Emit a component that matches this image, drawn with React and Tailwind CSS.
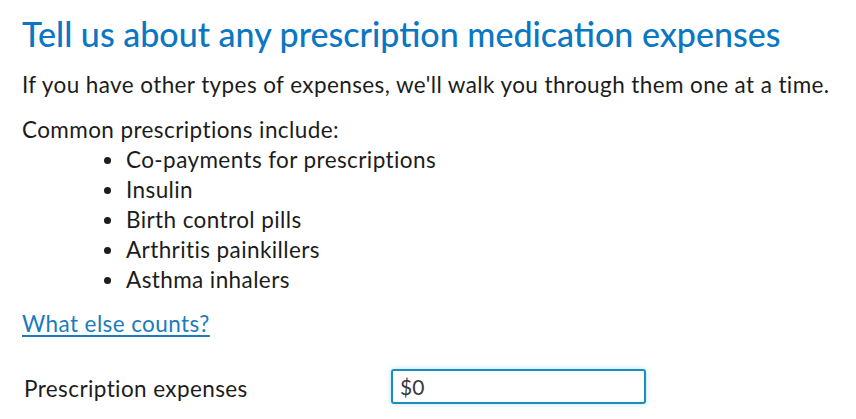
import React from "react";

const items = [
  "Co-payments for prescriptions",
  "Insulin",
  "Birth control pills",
  "Arthritis painkillers",
  "Asthma inhalers",
];

export default function App() {
  return (
    <div className="min-h-[419px] w-[856px] bg-white pl-[22px] pt-[14px] font-['Lato','Noto_Sans',sans-serif] text-[#1c1c1c]">
      <h1 className="text-[34px] leading-[40px] font-medium text-[#0a77c2]">
        Tell us about any prescription medication expenses
      </h1>
      <div className="text-[22.5px] tracking-[0.4px]">
        <p className="mt-[16px] leading-[30px]">
          If you have other types of expenses, we'll walk you through them one at a time.
        </p>
        <p className="mt-[15px] leading-[30px]">Common prescriptions include:</p>
        <ul className="pl-[82px] leading-[30px]">
          {items.map((item) => (
            <li key={item} className="flex items-center">
              <span className="mr-[15px] h-[7px] w-[7px] rounded-full bg-[#1c1c1c]" />
              {item}
            </li>
          ))}
        </ul>
        <a href="#" className="mt-[14px] block w-fit leading-[30px] text-[#1a7cbd] underline underline-offset-[3px]">
          What else counts?
        </a>
        <div className="mt-[30px] flex items-center">
          <label className="w-[369px] pl-[2px] pt-[5px] leading-[30px]">Prescription expenses</label>
          <input
            readOnly
            value="$0"
            className="h-[35px] w-[255px] rounded-[3px] border-2 border-[#1f8bb8] px-[7px] text-[21px] tracking-normal text-[#3a3a3a] shadow-[0_0_5px_#a8e4f7] outline-none"
          />
        </div>
      </div>
    </div>
  );
}
